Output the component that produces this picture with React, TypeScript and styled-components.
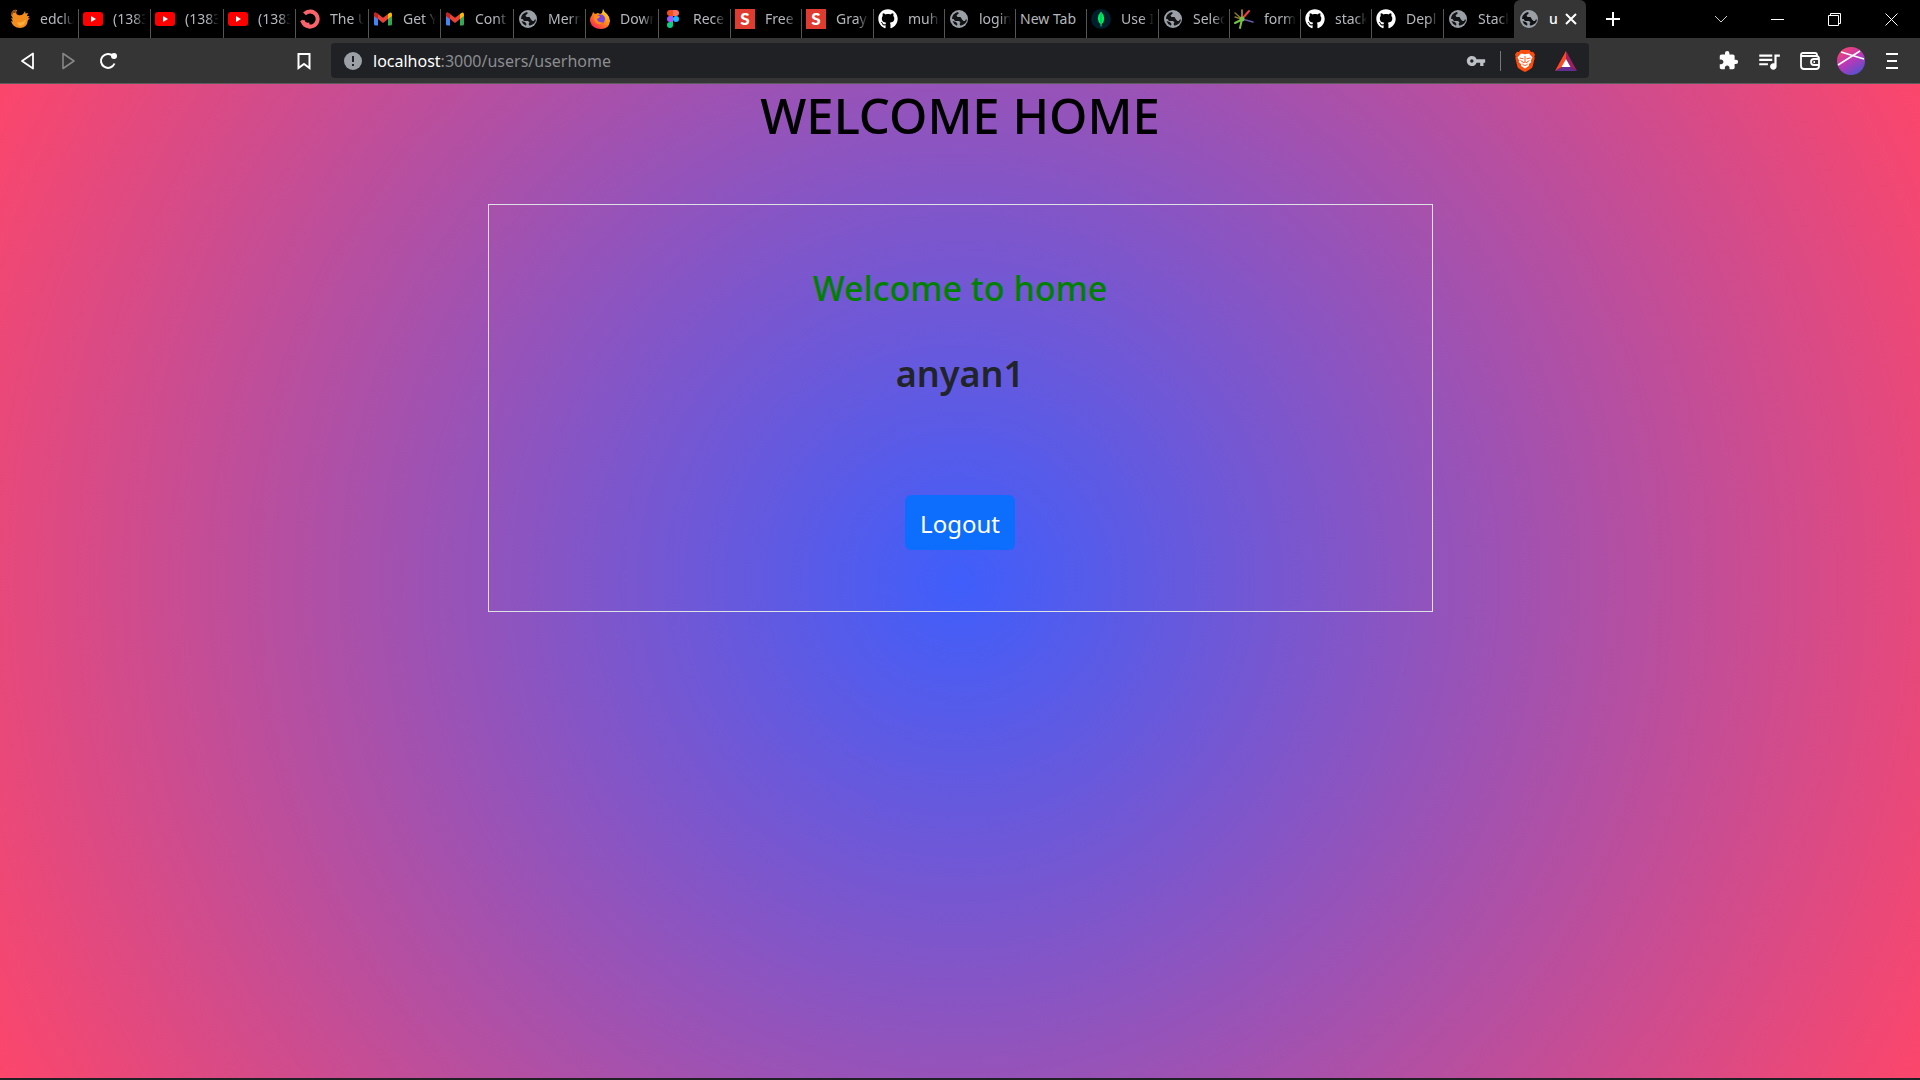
import React from "react";
import styled, { createGlobalStyle, css } from "styled-components";
import { FaGithub } from "react-icons/fa";
import { MdVpnKey, MdExtension, MdQueueMusic } from "react-icons/md";

const GlobalStyle = createGlobalStyle`
  *, *::before, *::after { box-sizing: border-box; }
  body {
    margin: 0;
    font-family: "Noto Sans", "Open Sans", sans-serif;
    background: #202124;
  }
  button, input { font-family: inherit; }
`;

const Screen = styled.div`
  display: flex;
  flex-direction: column;
  min-height: 100vh;
  padding-bottom: 2px;
`;

const TabStrip = styled.header`
  display: flex;
  align-items: flex-end;
  height: 38px;
  background: #000;
`;

const TabTitle = styled.span<{ $fade?: boolean }>`
  flex: 1;
  overflow: hidden;
  white-space: nowrap;
  ${(p) => p.$fade && css`mask-image: linear-gradient(to right, #000 calc(100% - 12px), transparent);`}
`;

const Tab = styled.button<{ $width: number; $active?: boolean; $first?: boolean; $last?: boolean }>`
  display: flex;
  flex: none;
  align-items: flex-start;
  width: ${(p) => p.$width}px;
  height: 29px;
  padding: 0 4px 0 ${(p) => (p.$first ? 10 : 4)}px;
  border: 0;
  border-right: 1px solid ${(p) => (p.$last ? "transparent" : "#555")};
  background: transparent;
  color: #b4b8bc;
  font-size: 14px;
  line-height: 20px;
  text-align: left;
  ${(p) =>
    p.$active &&
    css`
      height: 38px;
      padding: 9px 8px 0 5px;
      border: 0;
      border-radius: 6px 6px 0 0;
      background: #353535;
      color: #fff;
      font-weight: 500;
    `}
  svg { flex: none; }
  * + ${TabTitle} { margin-left: 10px; }
`;

const WindowButton = styled.button`
  display: grid;
  place-items: center;
  width: 57px;
  height: 38px;
  padding: 0;
  border: 0;
  background: transparent;
  color: #fff;
`;

const NewTabButton = styled(WindowButton)`
  width: 54px;
`;

const WindowControls = styled.div`
  display: flex;
  margin-left: auto;
`;

const Toolbar = styled.nav`
  display: flex;
  align-items: center;
  height: 46px;
  padding: 0 8px;
  border-bottom: 1px solid #5c5c5c;
  background: #353535;
`;

const ToolButton = styled.button`
  display: grid;
  place-items: center;
  width: 40px;
  height: 36px;
  padding: 0;
  border: 0;
  background: transparent;
  color: #fff;
`;

const NavButtons = styled.div`
  display: flex;
  flex: none;
  width: 276px;
`;

const AddressBar = styled.div`
  display: flex;
  flex: 1;
  align-items: center;
  height: 35px;
  margin: 0 119px 0 7px;
  padding: 0 12px 0 13px;
  border-radius: 4px;
  background: #202124;
  color: #fff;
`;

const Address = styled.span`
  flex: 1;
  margin-left: 11px;
  color: #8b8d90;
  font-size: 16px;
  line-height: 24px;
`;

const Host = styled.span`
  color: #fff;
`;

const AddressIcons = styled.div`
  display: flex;
  align-items: center;
  color: #bdc1c6;
`;

const Divider = styled.span`
  width: 1px;
  height: 20px;
  margin: 0 14px;
  background: #777;
`;

const AddressButton = styled.button`
  display: grid;
  place-items: center;
  padding: 0;
  border: 0;
  background: transparent;
  color: inherit;
`;

const RewardsButton = styled(AddressButton)`
  margin-left: 20px;
`;

const Extras = styled.div`
  display: flex;
  gap: 1px;
`;

const Page = styled.main`
  flex: 1;
  display: flex;
  flex-direction: column;
  align-items: center;
  background: radial-gradient(circle, #3f5efb 0%, #fc466b 100%);
  color: #212529;
  text-align: center;
`;

const PageTitle = styled.h1`
  margin: 0;
  color: #000;
  font-size: 49px;
  font-weight: 500;
  line-height: 62px;
`;

const Card = styled.section`
  display: flex;
  flex-direction: column;
  align-items: center;
  width: 945px;
  max-width: 100%;
  margin-top: 58px;
  padding: 61px 24px;
  border: 1px solid #dee2e6;
`;

const Greeting = styled.h2`
  margin: 0;
  color: #008000;
  font-size: 34px;
  font-weight: 500;
  line-height: 44px;
`;

const UserName = styled.h2`
  margin: 40px 0 0;
  font-size: 36px;
  font-weight: 600;
  line-height: 48px;
`;

const LogoutButton = styled.button`
  height: 55px;
  margin-top: 97px;
  padding: 2px 15px 0;
  border: 0;
  border-radius: 6px;
  background: #0d6efd;
  color: #fff;
  font-size: 24px;
`;

const Globe = () => (
  <svg width="20" height="20" viewBox="0 0 20 20">
    <circle cx="10" cy="10" r="9" fill="#9aa0a6" />
    <path
      d="M3 10q0-5 5.500-7l1.500 1-2.500 2.500 1 1.500h3l1.500 2.500 1.500 1.500h1.500l.8-1.500h1.200q-.7 5-6.500 6.200l-1-1.700 1-1.500-1.500-1.500H6L4.500 10z"
      fill="#111214"
    />
    <path d="M3.500 12q1 3.500 4.500 4.700l.5-1.700-1.500-2z" fill="#111214" />
  </svg>
);
const Github = () => <FaGithub size={20} color="#fff" />;

const YouTube = () => (
  <svg width="20" height="20" viewBox="0 0 20 20">
    <rect y="3" width="20" height="14" rx="3" fill="#f00" />
    <path d="M8 7l5 3-5 3z" fill="#fff" />
  </svg>
);

const Gmail = () => (
  <svg width="20" height="20" viewBox="0 0 20 20">
    <path d="M1 6v9q0 1.500 1.500 1.500H5V9z" fill="#4285f4" />
    <path d="M19 6v9q0 1.500-1.500 1.500H15V9z" fill="#34a853" />
    <path d="M15 5l1.300-1Q19 2.500 19 6v1l-4 3z" fill="#fbbc04" />
    <path d="M1 6Q1 2.500 3.700 4L10 8.700 15 5v5l-5 4-5-4-4-3z" fill="#ea4335" />
    <path d="M1 7V6Q1 2.500 3.700 4L5 5v5z" fill="#c5221f" />
  </svg>
);

const Bird = () => (
  <svg width="20" height="20" viewBox="0 0 20 20">
    <path d="M1 6Q2 0 7 1q-2 4 1 5 4 1 6-2l1-2 .5 2.500L18 4l-1 3 2.500 0-1.500 2 2 .5-2 1.500q-1 8-8 8-7 0-9-7l2 .5L1 9l2 .5z" fill="#f28c1e" />
    <path d="M1 5q1-4 5-4l-.5 3-2.500 0-1 3z" fill="#8a4a12" />
    <path d="M7 13q5 2 9-3-1 6-5 7-3 0-4-4z" fill="#ffac3b" />
  </svg>
);

const Ring = () => (
  <svg width="20" height="20" viewBox="0 0 20 20" fill="none" stroke="#f9646c">
    <path d="M4.500 4.800A7.600 7.600 0 1 1 2.600 11.500" strokeWidth="4" />
    <path d="M1.500 11.500q3 4.500 8 3.500" strokeWidth="3" />
  </svg>
);

const Firefox = () => (
  <svg width="20" height="20" viewBox="0 0 20 20">
    <defs>
      <linearGradient id="fox" x1="1" y1="0" x2="0.200" y2="1">
        <stop offset="0" stopColor="#fff44f" />
        <stop offset="0.450" stopColor="#ff980e" />
        <stop offset="1" stopColor="#ff1f5a" />
      </linearGradient>
    </defs>
    <path d="M3 3l2 2 3-1 2 1 2-1 1-4q1 3 4 5 3 3 3 7-1 8-9 8-9 0-11-8 0-4 2-6z" fill="url(#fox)" />
    <circle cx="10.500" cy="10" r="4.500" fill="#7542e5" />
    <path d="M5 6l5 1q0 2-3 3 1 4 6 3-3 4-7 1-4-4-1-8z" fill="#ff8a16" />
  </svg>
);

const Figma = () => (
  <svg width="20" height="20" viewBox="0 0 20 20">
    <path d="M10 1H7a3 3 0 0 0 0 6h3z" fill="#f24e1e" />
    <path d="M10 1h3a3 3 0 0 1 0 6h-3z" fill="#ff7262" />
    <path d="M10 7H7a3 3 0 0 0 0 6h3z" fill="#a259ff" />
    <circle cx="13" cy="10" r="3" fill="#1abcfe" />
    <path d="M10 13H7a3 3 0 1 0 3 3z" fill="#0acf83" />
  </svg>
);

const LetterTile = styled.span`
  flex: none;
  width: 20px;
  height: 20px;
  background: #df3b30;
  color: #fff;
  font: 900 17px/20px "Lato", sans-serif;
  text-align: center;
`;

const Mongo = () => (
  <svg width="20" height="20" viewBox="0 0 20 20">
    <circle cx="10" cy="10" r="10" fill="#001e2b" />
    <path d="M10 2.500q3 3 3.200 7 0 4-2.700 6v2h-.8v-2Q7 13 6.800 9.500 7 5.500 10 2.500z" fill="#00ed64" />
    <path d="M10 3v14" stroke="#00a848" strokeWidth="0.800" />
  </svg>
);

const Burst = () => (
  <svg width="20" height="20" viewBox="0 0 20 20" fill="none" strokeWidth="1.500" strokeLinecap="round">
    <path d="M8 10L15 2" stroke="#ef3d42" strokeWidth="2" />
    <path d="M8 10V1" stroke="#c89b2c" />
    <path d="M8 10L1 4" stroke="#8a7a30" />
    <path d="M8 10L1 8" stroke="#8a7a30" />
    <path d="M8 10l11 3" stroke="#6a55a8" />
    <path d="M9 10L1 14M8 10l-2 9" stroke="#7ac143" strokeWidth="2" />
    <circle cx="8" cy="10" r="2.500" fill="#7ac143" />
  </svg>
);

const Lion = () => (
  <svg width="20" height="22" viewBox="0 0 20 22">
    <path d="M5.500 0h9L16 2l2-.3L20 4.500l-.7 2 .4 1.500-2.200 9Q17 18.500 10 22 3 18.500 2.500 17L.3 8l.4-1.500L0 4.500 2 1.700 4 2z" fill="#fb4c0f" />
    <path d="M6 3.500l4 .8 4-.8 3.500 4-1.700 3 .5 1.500-2.300 2-.2 2L10 18.500 6.200 16 6 14l-2.300-2 .5-1.500-1.700-3z" fill="#fff" />
    <path d="M10 6v6M4.500 8l4 .8M15.500 8l-4 .8M7.500 13L10 12l2.500 1M7.500 14.500l2.500 1 2.500-1M5.500 10.500L8 12M14.500 10.500L12 12" stroke="#fb4c0f" strokeWidth="0.900" fill="none" />
  </svg>
);

type TabInfo = { title: string; width: number; icon?: React.ReactNode };

const youtube = <YouTube />;
const tabs: TabInfo[] = [
  { title: "edclu", width: 79, icon: <Bird /> },
  { title: "(1383", width: 72, icon: youtube },
  { title: "(1383", width: 73, icon: youtube },
  { title: "(1383", width: 72, icon: youtube },
  { title: "The U", width: 73, icon: <Ring /> },
  { title: "Get Y", width: 72, icon: <Gmail /> },
  { title: "Cont", width: 73, icon: <Gmail /> },
  { title: "Mern", width: 72, icon: <Globe /> },
  { title: "Down", width: 73, icon: <Firefox /> },
  { title: "Rece", width: 72, icon: <Figma /> },
  { title: "Free", width: 71, icon: <LetterTile>S</LetterTile> },
  { title: "Gray", width: 72, icon: <LetterTile>S</LetterTile> },
  { title: "muha", width: 71, icon: <Github /> },
  { title: "login", width: 71, icon: <Globe /> },
  { title: "New Tab", width: 71 },
  { title: "Use I", width: 72, icon: <Mongo /> },
  { title: "Selec", width: 71, icon: <Globe /> },
  { title: "form", width: 71, icon: <Burst /> },
  { title: "stack", width: 71, icon: <Github /> },
  { title: "Depl", width: 72, icon: <Github /> },
  { title: "Stack", width: 70, icon: <Globe /> },
];

export default function App() {
  return (
    <Screen>
      <GlobalStyle />
      <TabStrip>
        {tabs.map((tab, i) => (
          <Tab key={i} $width={tab.width} $first={i === 0} $last={i === tabs.length - 1}>
            {tab.icon}
            <TabTitle $fade={!!tab.icon}>{tab.title}</TabTitle>
          </Tab>
        ))}
        <Tab $width={72} $active>
          <Globe />
          <TabTitle>u</TabTitle>
          <svg width="14" height="20" viewBox="0 0 14 20" stroke="#fff" strokeWidth="2">
            <path d="M2 5l10 10M12 5L2 15" />
          </svg>
        </Tab>
        <NewTabButton aria-label="New tab">
          <svg width="16" height="16" viewBox="0 0 16 16" stroke="#fff" strokeWidth="2">
            <path d="M8 1v14M1 8h14" />
          </svg>
        </NewTabButton>
        <WindowControls>
          <WindowButton aria-label="Search tabs">
            <svg width="14" height="8" viewBox="0 0 14 8" fill="none" stroke="#ccc">
              <path d="M1 1l6 6 6-6" />
            </svg>
          </WindowButton>
          <WindowButton aria-label="Minimize">
            <svg width="13" height="13" viewBox="0 0 13 13" fill="none" stroke="#fff">
              <path d="M0 6.500h13" />
            </svg>
          </WindowButton>
          <WindowButton aria-label="Restore">
            <svg width="13" height="13" viewBox="0 0 13 13" fill="none" stroke="#fff">
              <path d="M.5 2.500h10v10H.5zM2.500 2.500v-2h10v10h-2" />
            </svg>
          </WindowButton>
          <WindowButton aria-label="Close">
            <svg width="13" height="13" viewBox="0 0 13 13" fill="none" stroke="#fff">
              <path d="M.5.5l12 12M12.500.5l-12 12" />
            </svg>
          </WindowButton>
        </WindowControls>
      </TabStrip>

      <Toolbar>
        <NavButtons>
          <ToolButton aria-label="Back">
            <svg width="18" height="18" viewBox="0 0 18 18" fill="none" stroke="#fff" strokeWidth="1.800" strokeLinejoin="round">
              <path d="M14 1.500v15L3 9z" />
            </svg>
          </ToolButton>
          <ToolButton aria-label="Forward">
            <svg width="18" height="18" viewBox="0 0 18 18" fill="none" stroke="#868686" strokeWidth="1.600" strokeLinejoin="round">
              <path d="M4 1.500v15L15 9z" />
            </svg>
          </ToolButton>
          <ToolButton aria-label="Reload">
            <svg width="18" height="18" viewBox="0 0 18 18" fill="none" stroke="#fff" strokeWidth="2">
              <path d="M15.500 11.500A7 7 0 1 1 14 4" />
              <circle cx="15" cy="4" r="2" fill="#fff" />
            </svg>
          </ToolButton>
        </NavButtons>
        <ToolButton aria-label="Bookmark">
          <svg width="14" height="18" viewBox="0 0 14 18" fill="none" stroke="#fff" strokeWidth="2">
            <path d="M1.500 2h11v14L7 12l-5.500 4z" />
          </svg>
        </ToolButton>
        <AddressBar>
          <svg width="18" height="18" viewBox="0 0 18 18">
            <circle cx="9" cy="9" r="9" fill="#9aa0a6" />
            <path d="M8 4h2v6H8zM8 12h2v2H8z" fill="#202124" />
          </svg>
          <Address><Host>localhost</Host>:3000/users/userhome</Address>
          <AddressIcons>
            <AddressButton aria-label="Passwords"><MdVpnKey size={20} /></AddressButton>
            <Divider />
            <AddressButton aria-label="Shields"><Lion /></AddressButton>
            <RewardsButton aria-label="Rewards">
              <svg width="22" height="20" viewBox="0 0 22 20">
                <path d="M11 0L0 20l7-4 4-8z" fill="#ff4724" />
                <path d="M11 0l11 20-7-4-4-8z" fill="#9e1f63" />
                <path d="M0 20l7-4h8l7 4z" fill="#662d91" />
                <path d="M11 8l4.500 8h-9z" fill="#fff" />
              </svg>
            </RewardsButton>
          </AddressIcons>
        </AddressBar>
        <Extras>
          <ToolButton aria-label="Extensions"><MdExtension size={21} /></ToolButton>
          <ToolButton aria-label="Playlist"><MdQueueMusic size={26} /></ToolButton>
          <ToolButton aria-label="Wallet">
            <svg width="20" height="18" viewBox="0 0 20 18" fill="none" stroke="#fff" strokeWidth="1.800">
              <path d="M17 4.500V3q0-2-2-2H3Q1 1 1 3v11q0 3 3 3h12q3 0 3-3V7q0-3-3-3H1M19 7h-5a3 3 0 0 0 0 6h5M13.500 10h1.500" />
            </svg>
          </ToolButton>
          <ToolButton aria-label="Profile">
            <svg width="28" height="28" viewBox="0 0 28 28">
              <defs>
                <linearGradient id="avatar" x1="0.200" y1="0" x2="0.800" y2="1">
                  <stop offset="0" stopColor="#f5476b" />
                  <stop offset="0.450" stopColor="#c136b5" />
                  <stop offset="1" stopColor="#4c54d2" />
                </linearGradient>
              </defs>
              <circle cx="14" cy="14" r="14" fill="url(#avatar)" />
              <path d="M1 18L23 4M4 5l23 7" stroke="#fff" strokeWidth="1.500" />
            </svg>
          </ToolButton>
          <ToolButton aria-label="Menu">
            <svg width="12" height="16" viewBox="0 0 12 16" stroke="#fff" strokeWidth="2">
              <path d="M0 1h12M1 8h10M0 15h12" />
            </svg>
          </ToolButton>
        </Extras>
      </Toolbar>

      <Page>
        <PageTitle>WELCOME HOME</PageTitle>
        <Card>
          <Greeting>Welcome to home</Greeting>
          <UserName>anyan1</UserName>
          <LogoutButton>Logout</LogoutButton>
        </Card>
      </Page>
    </Screen>
  );
}
